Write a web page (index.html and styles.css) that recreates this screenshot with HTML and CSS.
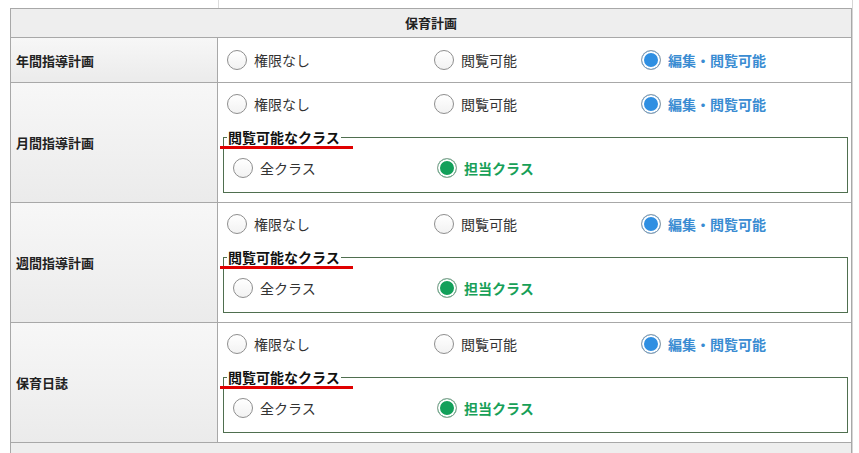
FILE: index.html
```html
<!DOCTYPE html>
<html lang="ja">
<head>
<meta charset="utf-8">
<title>保育計画 権限設定</title>
<link rel="stylesheet" href="styles.css">
</head>
<body>
<div class="page">
  <div class="stub"><div class="stub-left"></div></div>
  <div class="perm-table">
    <div class="section-head">保育計画</div>

    <div class="row row-simple">
      <div class="label">年間指導計画</div>
      <div class="value">
        <div class="choices">
          <label class="choice"><span class="radio"></span>権限なし</label>
          <label class="choice"><span class="radio"></span>閲覧可能</label>
          <label class="choice is-edit"><span class="radio radio-blue"></span>編集・閲覧可能</label>
        </div>
      </div>
    </div>

    <div class="row row-class">
      <div class="label">月間指導計画</div>
      <div class="value value-class">
        <div class="choices">
          <label class="choice"><span class="radio"></span>権限なし</label>
          <label class="choice"><span class="radio"></span>閲覧可能</label>
          <label class="choice is-edit"><span class="radio radio-blue"></span>編集・閲覧可能</label>
        </div>
        <fieldset class="classes">
          <legend class="classes-title">閲覧可能なクラス</legend>
          <div class="choices">
            <label class="choice"><span class="radio"></span>全クラス</label>
            <label class="choice is-own"><span class="radio radio-green"></span>担当クラス</label>
          </div>
        </fieldset>
      </div>
    </div>

    <div class="row row-class">
      <div class="label">週間指導計画</div>
      <div class="value value-class">
        <div class="choices">
          <label class="choice"><span class="radio"></span>権限なし</label>
          <label class="choice"><span class="radio"></span>閲覧可能</label>
          <label class="choice is-edit"><span class="radio radio-blue"></span>編集・閲覧可能</label>
        </div>
        <fieldset class="classes">
          <legend class="classes-title">閲覧可能なクラス</legend>
          <div class="choices">
            <label class="choice"><span class="radio"></span>全クラス</label>
            <label class="choice is-own"><span class="radio radio-green"></span>担当クラス</label>
          </div>
        </fieldset>
      </div>
    </div>

    <div class="row row-class">
      <div class="label">保育日誌</div>
      <div class="value value-class">
        <div class="choices">
          <label class="choice"><span class="radio"></span>権限なし</label>
          <label class="choice"><span class="radio"></span>閲覧可能</label>
          <label class="choice is-edit"><span class="radio radio-blue"></span>編集・閲覧可能</label>
        </div>
        <fieldset class="classes">
          <legend class="classes-title">閲覧可能なクラス</legend>
          <div class="choices">
            <label class="choice"><span class="radio"></span>全クラス</label>
            <label class="choice is-own"><span class="radio radio-green"></span>担当クラス</label>
          </div>
        </fieldset>
      </div>
    </div>

    <div class="section-head section-next"></div>
  </div>
</div>
</body>
</html>
```

FILE: styles.css
```css
html, body {
  margin: 0;
  padding: 0;
  overflow: hidden;
  background: #ffffff;
}

body {
  font-family: "Noto Sans CJK JP", "Noto Sans", sans-serif;
  color: #222222;
}

.page {
  width: 842px;
  margin-left: 10px;
  border-right: 1px solid #d6d6d6;
}

.stub {
  height: 8px;
  display: flex;
}

.stub-left {
  width: 208px;
  border-right: 1px solid #dcdcdc;
}

.perm-table {
  border: 1px solid #a8a8a8;
  border-bottom: none;
}

.section-head {
  height: 28px;
  background: #eeeeee;
  border-bottom: 1px solid #a8a8a8;
  text-align: center;
  font-size: 13px;
  font-weight: bold;
  line-height: 28px;
  color: #222222;
}

.section-next {
  height: 10px;
  border-bottom: none;
}

.row {
  display: grid;
  grid-template-columns: 207px 1fr;
  border-bottom: 1px solid #a8a8a8;
}

.row-simple {
  height: 44px;
}

.row-class {
  height: 119px;
}

.label {
  border-right: 1px solid #a8a8a8;
  background: linear-gradient(#f7f7f7, #ebebeb);
  display: flex;
  align-items: center;
  padding-left: 5px;
  font-size: 13px;
  font-weight: bold;
  color: #222222;
}

.value {
  display: flex;
  align-items: center;
  padding-left: 9px;
}

.value-class {
  display: block;
  padding: 9px 5px 0 5px;
}

.value-class > .choices {
  margin-left: 4px;
}

.choices {
  display: flex;
}

.choice {
  width: 207px;
  height: 24px;
  display: flex;
  align-items: center;
  gap: 7px;
  font-size: 14px;
  line-height: 24px;
  color: #333333;
}

.radio {
  width: 20px;
  height: 20px;
  box-sizing: border-box;
  border-radius: 50%;
  border: 1px solid #8e8e8e;
  background: linear-gradient(#ffffff, #f2f2f2);
  flex: none;
}

.radio-blue {
  border-color: #8f9eab;
  background: #2f8fe2;
  box-shadow: inset 0 0 0 2px #ffffff;
}

.radio-green {
  border-color: #8fa598;
  background: #12a05a;
  box-shadow: inset 0 0 0 2px #ffffff;
}

.is-edit {
  color: #3a8cd2;
  font-weight: bold;
}

.is-own {
  color: #17a058;
  font-weight: bold;
}

.classes {
  margin: 11px 0 0 0;
  padding: 9px 9px 12px 9px;
  border: 1px solid #4f6f4f;
  min-inline-size: 0;
}

.classes .choice {
  width: 204px;
}

.classes-title {
  position: relative;
  margin-left: -6px;
  padding: 0 1px;
  font-size: 14px;
  font-weight: bold;
  line-height: 20px;
  color: #111111;
}

.classes-title::after {
  content: "";
  position: absolute;
  left: -7px;
  top: 19px;
  width: 133px;
  height: 3px;
  background: #e00000;
}
```
